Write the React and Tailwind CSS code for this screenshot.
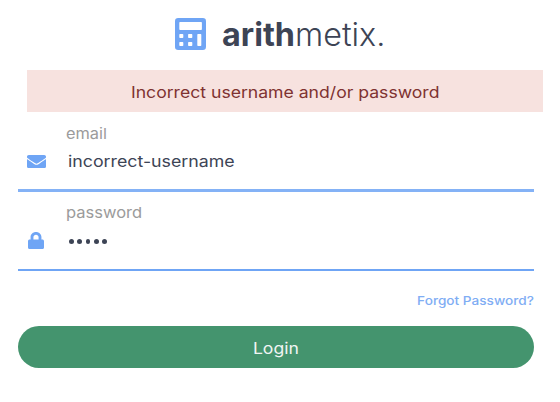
function Calculator() {
  return (
    <svg className="h-8 w-[31px] shrink-0" viewBox="0 0 31 32" fill="none">
      <rect width="31" height="32" rx="3.2" fill="#6fa5f5" />
      <g fill="#fff">
        <rect x="4.3" y="4" width="22.6" height="8" rx=".8" />
        <rect x="4.3" y="16" width="4" height="4" rx=".7" />
        <rect x="13.1" y="16" width="4.2" height="4" rx=".7" />
        <rect x="4.3" y="24" width="4" height="4" rx=".7" />
        <rect x="13.1" y="24" width="4.2" height="4" rx=".7" />
        <rect x="22.3" y="16" width="4" height="12" rx=".7" />
      </g>
    </svg>
  );
}

function Envelope() {
  return (
    <svg className="h-[13px] w-[19px]" viewBox="0 64 512 384" preserveAspectRatio="none" fill="#6fa5f5">
      <path d="M502.3 190.8c3.9-3.1 9.7-.2 9.7 4.7V400c0 26.500-21.500 48-48 48H48c-26.500 0-48-21.500-48-48V195.600c0-5 5.700-7.800 9.700-4.700 22.400 17.400 52.100 39.500 154.100 113.600 21.100 15.400 56.700 47.800 92.200 47.600 35.700.3 72-32.800 92.300-47.600 102-74.100 131.600-96.300 154-113.700zM256 320c23.200.4 56.600-29.200 73.400-41.400 132.700-96.300 142.800-104.700 173.400-128.700 5.800-4.500 9.200-11.500 9.200-18.900v-19c0-26.500-21.500-48-48-48H48c-26.500 0-48 21.500-48 48v19c0 7.400 3.400 14.300 9.200 18.900 30.600 23.900 40.700 32.400 173.400 128.700 16.800 12.200 50.200 41.800 73.400 41.400z" />
    </svg>
  );
}

function Lock() {
  return (
    <svg className="ml-px h-[17px] w-[16px]" viewBox="0 0 448 512" preserveAspectRatio="none" fill="#6fa5f5">
      <path d="M400 224h-24v-72C376 68.200 307.800 0 224 0S72 68.200 72 152v72H48c-26.500 0-48 21.500-48 48v192c0 26.500 21.500 48 48 48h352c26.500 0 48-21.500 48-48V272c0-26.500-21.500-48-48-48zm-104 0H152v-72c0-39.700 32.300-72 72-72s72 32.300 72 72v72z" />
    </svg>
  );
}

export default function App() {
  return (
    <main className="h-[402px] w-[560px] overflow-hidden bg-white font-['Inter',sans-serif] text-[#3d4455]">
      <header className="flex h-[70px] pt-[18px] pl-[175px]">
        <Calculator />
        <h1 className="ml-[16px] -mt-[1px] origin-left scale-x-[1.01] text-[32px] leading-9 whitespace-nowrap">
          <span className="font-bold">arith</span>
          <span className="font-light">metix.</span>
        </h1>
      </header>
      <div className="ml-[27px] flex h-[42px] w-[516px] items-center justify-center bg-[#f7e2df] pt-px text-[16px] text-[#7f3231]">
        <span className="inline-block scale-x-[1.1] whitespace-nowrap">Incorrect username and/or password</span>
      </div>
      <form className="ml-[18px] w-[516px]">
        <div className="flex h-[80px] flex-col border-b-[3px] border-[#84b2f6] pt-[12px]">
          <label className="ml-[48px] origin-left scale-x-[1.09] self-start text-[15px] leading-5 text-[#9b9b9b]">email</label>
          <div className="mt-[7px] flex h-5 items-center pl-[9px]">
            <span className="w-[41px]"><Envelope /></span>
            <span className="origin-left scale-x-[1.11] text-[16px] leading-5">incorrect-username</span>
          </div>
        </div>
        <div className="flex h-[79px] flex-col border-b-2 border-[#6fa5f5] pt-[11px]">
          <label className="ml-[48px] origin-left scale-x-[1.1] self-start text-[15px] leading-5 text-[#9b9b9b]">password</label>
          <div className="mt-[7px] flex h-5 items-center pl-[9px]">
            <span className="w-[42px]"><Lock /></span>
            <span className="flex gap-[3.600px] pt-[3px]">
              {[0, 1, 2, 3, 4].map((dot) => (
                <i key={dot} className="h-[4.700px] w-[4.700px] rounded-full bg-[#3d4455]" />
              ))}
            </span>
          </div>
        </div>
        <div className="flex h-[55px] items-start justify-end pt-[20px]">
          <a className="origin-right scale-x-[1.135] text-[12px] leading-5 font-medium text-[#80adf4]">Forgot Password?</a>
        </div>
        <button type="button" className="flex h-[42px] w-full items-center justify-center rounded-full bg-[#44946e] pt-px text-[16px] text-[#f1f5f3]">
          <span className="inline-block scale-x-[1.1]">Login</span>
        </button>
      </form>
    </main>
  );
}
